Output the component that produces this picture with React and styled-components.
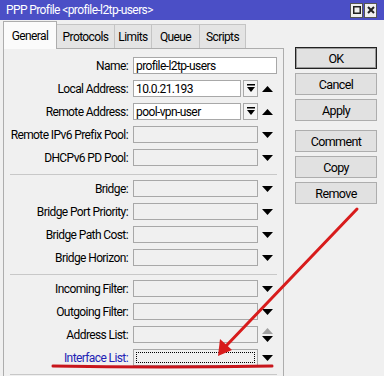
import React from "react"
import styled, { createGlobalStyle, css } from "styled-components"

const Global = createGlobalStyle`
  body {
    margin: 0;
    background: #f0f0f0;
  }
`

const Window = styled.div`
  position: relative;
  width: 384px;
  height: 376px;
  overflow: hidden;
  background: #f0f0f0;
  font-family: Roboto, "Liberation Sans", sans-serif;
  font-size: 12px;
  letter-spacing: -0.6px;
  color: #000;
`

const TitleBar = styled.div`
  height: 20px;
  background: #4b4fc6;
  color: #fff;
  display: flex;
  align-items: center;
  justify-content: space-between;
  padding-left: 6px;
`

const TitleButtons = styled.div`
  display: flex;
  gap: 1px;
  margin-right: 7px;
`

const TitleButton = styled.div`
  width: 11px;
  height: 13px;
  background: #f0f0f0;
  border: 1px solid #555;
  display: flex;
  align-items: center;
  justify-content: center;
`

const Body = styled.div`
  display: flex;
  padding: 1px 0 0 3px;
`

const Left = styled.div`
  width: 281px;
`

const Tabs = styled.div`
  display: flex;
  align-items: flex-end;
  height: 27px;
  position: relative;
  z-index: 1;
`

const Tab = styled.div`
  width: ${(p) => p.$w}px;
  height: 24px;
  box-sizing: border-box;
  display: flex;
  align-items: center;
  justify-content: center;
  background: #e4e4e4;
  border: 1px solid #c4c4c4;
  border-left: none;
  border-bottom: none;
  ${(p) =>
    p.$active &&
    css`
      height: 28px;
      margin-bottom: -1px;
      background: #fbfbfb;
      border: 1px solid #adadad;
      border-bottom: none;
    `}
`

const Panel = styled.div`
  height: 340px;
  box-sizing: border-box;
  border: 1px solid #adadad;
  border-bottom: none;
  background: #f0f0f0;
  padding-top: 8px;
`

const Group = styled.div`
  display: flex;
  flex-direction: column;
  gap: 6px;
`

const Separator = styled.div`
  height: 1px;
  background: #c8c8c8;
  margin: 8px 6px 5px 6px;
`

const Row = styled.div`
  display: flex;
  align-items: center;
  height: 17px;
`

const Label = styled.div`
  width: 124px;
  margin-right: 5px;
  text-align: right;
  white-space: nowrap;
  color: ${(p) => (p.$link ? "#2222b4" : "#000")};
`

const Field = styled.div`
  width: ${(p) => p.$w}px;
  height: 17px;
  box-sizing: border-box;
  border: 1px solid #a8a8a8;
  background: ${(p) => (p.$filled ? "#fff" : "#f0f0f0")};
  padding-left: 2px;
  display: flex;
  align-items: center;
  white-space: nowrap;
  ${(p) =>
    p.$focus &&
    css`
      padding: 2px;
      &::after {
        content: "";
        flex: 1;
        align-self: stretch;
        border: 1px dotted #000;
      }
    `}
`

const DropButton = styled.div`
  width: 15px;
  height: 17px;
  box-sizing: border-box;
  margin-left: 2px;
  border: 1px solid #a8a8a8;
  background: #f4f4f4;
  display: flex;
  align-items: center;
  justify-content: center;
`

const Spin = styled.div`
  width: 19px;
  height: 17px;
  display: flex;
  flex-direction: column;
  align-items: center;
  justify-content: center;
  gap: 2px;
`

const Right = styled.div`
  margin-left: 11px;
  padding-top: 26px;
  display: flex;
  flex-direction: column;
  gap: 4px;
`

const Button = styled.div`
  width: 82px;
  height: 22px;
  box-sizing: border-box;
  background: #e1e1e1;
  border: 1px solid ${(p) => (p.$default ? "#222" : "#adadad")};
  box-shadow: ${(p) => (p.$default ? "inset 0 0 0 1px #9a9a9a" : "none")};
  display: flex;
  align-items: center;
  justify-content: center;
  font-size: 12.5px;
  margin-top: ${(p) => (p.$spaced ? "5px" : "0")};
`

const Overlay = styled.svg`
  position: absolute;
  left: 0;
  top: 0;
  pointer-events: none;
`

const Tri = ({ up, color = "#000" }) => (
  <svg width="11" height="6" viewBox="0 0 11 6">
    <path d={up ? "M0 6 L5.5 0 L11 6 Z" : "M0 0 L11 0 L5.5 6 Z"} fill={color} />
  </svg>
)

const DropIcon = () => (
  <svg width="8" height="9" viewBox="0 0 8 9">
    <rect x="0" y="0" width="8" height="1.5" fill="#000" />
    <path d="M0 3 L8 3 L4 8 Z" fill="#000" />
  </svg>
)

const tabs = [
  ["General", 54],
  ["Protocols", 58],
  ["Limits", 37],
  ["Queue", 48],
  ["Scripts", 46],
]
const rowsA = ["Remote IPv6 Prefix Pool:", "DHCPv6 PD Pool:"]
const rowsB = ["Bridge:", "Bridge Port Priority:", "Bridge Path Cost:", "Bridge Horizon:"]

function SimpleRow({ label, link, focus, both }) {
  return (
    <Row>
      <Label $link={link}>{label}</Label>
      <Field $w={125} $focus={focus} />
      <Spin>
        {both && <Tri up color="#a0a0a0" />}
        <Tri />
      </Spin>
    </Row>
  )
}

function PoolRow({ label, value }) {
  return (
    <Row>
      <Label>{label}</Label>
      <Field $w={108} $filled>
        {value}
      </Field>
      <DropButton>
        <DropIcon />
      </DropButton>
      <Spin>
        <Tri up />
      </Spin>
    </Row>
  )
}

export default function App() {
  return (
    <Window>
      <Global />
      <TitleBar>
        <span>PPP Profile &lt;profile-l2tp-users&gt;</span>
        <TitleButtons>
          <TitleButton>
            <svg width="8" height="8" viewBox="0 0 8 8">
              <rect x="0.75" y="0.75" width="6.5" height="6.5" fill="none" stroke="#222" strokeWidth="1.5" />
            </svg>
          </TitleButton>
          <TitleButton>
            <svg width="8" height="8" viewBox="0 0 8 8">
              <path d="M1 1 L7 7 M7 1 L1 7" stroke="#222" strokeWidth="2" />
            </svg>
          </TitleButton>
        </TitleButtons>
      </TitleBar>
      <Body>
        <Left>
          <Tabs>
            {tabs.map(([t, w], i) => (
              <Tab key={t} $w={w} $active={i === 0}>
                {t}
              </Tab>
            ))}
          </Tabs>
          <Panel>
            <Group>
              <Row>
                <Label>Name:</Label>
                <Field $w={144} $filled>
                  profile-l2tp-users
                </Field>
              </Row>
              <PoolRow label="Local Address:" value="10.0.21.193" />
              <PoolRow label="Remote Address:" value="pool-vpn-user" />
              {rowsA.map((l) => (
                <SimpleRow key={l} label={l} />
              ))}
            </Group>
            <Separator />
            <Group>
              {rowsB.map((l) => (
                <SimpleRow key={l} label={l} />
              ))}
            </Group>
            <Separator />
            <Group>
              <SimpleRow label="Incoming Filter:" />
              <SimpleRow label="Outgoing Filter:" />
              <SimpleRow label="Address List:" both />
              <SimpleRow label="Interface List:" link focus />
            </Group>
            <Separator />
          </Panel>
        </Left>
        <Right>
          <Button $default>OK</Button>
          <Button>Cancel</Button>
          <Button>Apply</Button>
          <Button $spaced>Comment</Button>
          <Button>Copy</Button>
          <Button>Remove</Button>
        </Right>
      </Body>
      <Overlay width="384" height="376" viewBox="0 0 384 376">
        <line x1="357" y1="209" x2="226" y2="346" stroke="#d81c1c" strokeWidth="3" strokeLinecap="round" />
        <path d="M218 356 L220 339 L232 350 Z" fill="#d81c1c" />
        <path d="M53 366 Q160 368 272 366" stroke="#c8161c" strokeWidth="3" fill="none" strokeLinecap="round" />
      </Overlay>
    </Window>
  )
}
